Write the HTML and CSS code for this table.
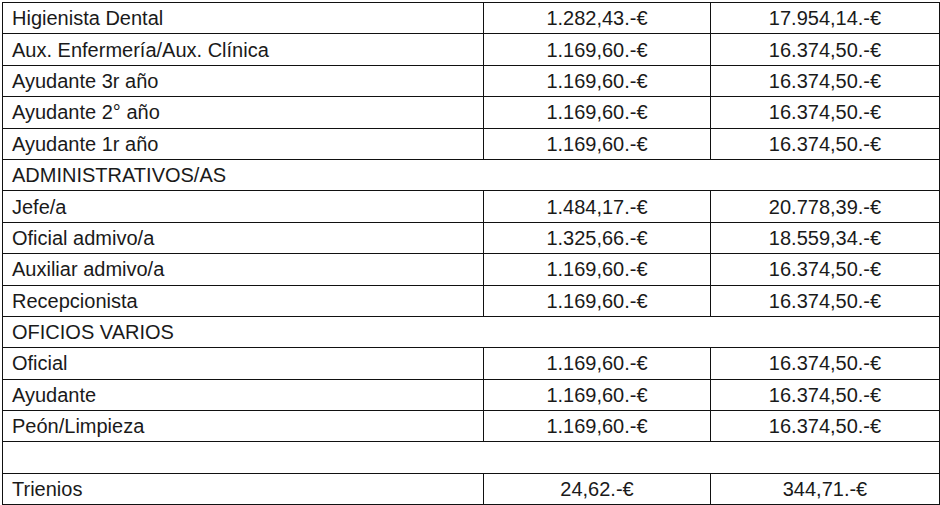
FILE: index.html
```html
<!DOCTYPE html>
<html lang="es">
<head>
<meta charset="utf-8">
<link rel="stylesheet" href="styles.css">
</head>
<body>
<div class="wrap">
<table class="salaries">
<colgroup><col class="c1"><col class="c2"><col class="c3"></colgroup>
<tbody>
<tr><td>Higienista Dental</td><td class="num">1.282,43.-€</td><td class="num">17.954,14.-€</td></tr>
<tr><td>Aux. Enfermería/Aux. Clínica</td><td class="num">1.169,60.-€</td><td class="num">16.374,50.-€</td></tr>
<tr><td>Ayudante 3r año</td><td class="num">1.169,60.-€</td><td class="num">16.374,50.-€</td></tr>
<tr><td>Ayudante 2° año</td><td class="num">1.169,60.-€</td><td class="num">16.374,50.-€</td></tr>
<tr><td>Ayudante 1r año</td><td class="num">1.169,60.-€</td><td class="num">16.374,50.-€</td></tr>
<tr><td colspan="3">ADMINISTRATIVOS/AS</td></tr>
<tr><td>Jefe/a</td><td class="num">1.484,17.-€</td><td class="num">20.778,39.-€</td></tr>
<tr><td>Oficial admivo/a</td><td class="num">1.325,66.-€</td><td class="num">18.559,34.-€</td></tr>
<tr><td>Auxiliar admivo/a</td><td class="num">1.169,60.-€</td><td class="num">16.374,50.-€</td></tr>
<tr><td>Recepcionista</td><td class="num">1.169,60.-€</td><td class="num">16.374,50.-€</td></tr>
<tr><td colspan="3">OFICIOS VARIOS</td></tr>
<tr><td>Oficial</td><td class="num">1.169,60.-€</td><td class="num">16.374,50.-€</td></tr>
<tr><td>Ayudante</td><td class="num">1.169,60.-€</td><td class="num">16.374,50.-€</td></tr>
<tr><td>Peón/Limpieza</td><td class="num">1.169,60.-€</td><td class="num">16.374,50.-€</td></tr>
<tr><td colspan="3"></td></tr>
<tr><td>Trienios</td><td class="num">24,62.-€</td><td class="num">344,71.-€</td></tr>
</tbody>
</table>
</div>
</body>
</html>
```

FILE: styles.css
```css
html, body {
  margin: 0;
  padding: 0;
  background: #fff;
}
.wrap {
  padding: 2px 0 0 2px;
}
.salaries {
  border-collapse: collapse;
  table-layout: fixed;
  width: 937px;
  font-family: "Liberation Sans", Arial, sans-serif;
  font-size: 20px;
  color: #1a1a1a;
}
.c1 { width: 481px; }
.c2 { width: 227px; }
.c3 { width: 229px; }
.salaries tr {
  height: 31.4px;
}
.salaries td {
  border: 1px solid #111;
  padding: 0 0 0 9px;
  vertical-align: middle;
  white-space: nowrap;
  line-height: 22px;
}
.salaries td.num {
  text-align: center;
  padding: 0;
}
```
